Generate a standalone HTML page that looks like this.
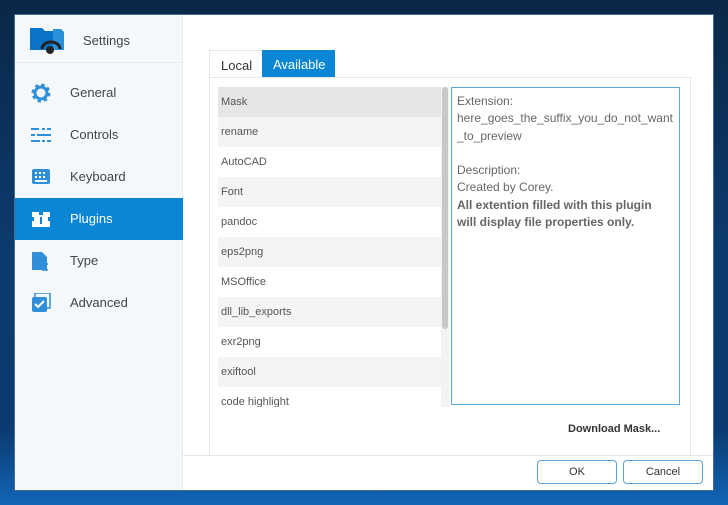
<!DOCTYPE html>
<html><head><meta charset="utf-8"><style>
*{margin:0;padding:0;box-sizing:border-box}
body{width:728px;height:505px;overflow:hidden;font-family:"Liberation Sans",sans-serif;background:linear-gradient(180deg,#0a2848 0%,#0c3b6e 50%,#0a3a70 85%,#1266b8 100%);position:relative}
.win{position:absolute;left:14px;top:14px;width:700px;height:477px;background:#fff;border:1px solid #4a6a8a;overflow:hidden}
.side{position:absolute;left:0;top:0;width:168px;height:100%;background:#f5f8fb;border-right:1px solid #e8ecef}
.hdr{height:48px;border-bottom:1px solid #e6eaee;position:relative}
.hdr span{position:absolute;left:68px;top:18px;font-size:13px;color:#444}
.nav{position:absolute;left:0;width:168px;height:42px;font-size:13px;color:#444}
.nav span{position:absolute;left:55px;top:13px}
.nav svg{position:absolute;left:16px;top:11px}
.nav.act{background:#0a86d4;color:#fff}
.tab{position:absolute;top:35px;height:27px;font-size:13px;padding:7px 11px}
.panel{position:absolute;left:194px;top:62px;width:482px;height:379px;border:1px solid #e6e6e6;border-bottom:none}
.row{position:absolute;left:8px;width:223px;height:30px;font-size:11px;color:#555;padding:9px 3px}
.row.g{background:#f4f4f4}
.desc{position:absolute;left:241px;top:9px;width:229px;height:318px;border:1px solid #5aaae0;padding:5px 5px;font-size:12px;color:#666;line-height:17.3px;word-break:break-all}
.btn{position:absolute;top:445px;width:80px;height:24px;border:1px solid #5aa0d6;border-radius:4px;font-size:11px;color:#333;text-align:center;line-height:22px}
</style></head><body>
<div class="win">
<div class="side">
<div class="hdr">
<svg style="position:absolute;left:14px;top:10px" width="36" height="30"><path d="M1 3h12l3 3h14v19H1z" fill="#0a74c8"/><path d="M24 4h8l3 3v18H24z" fill="#2a90d8"/><path d="M13 24a9 7 0 0 1 18 0" fill="none" stroke="#222" stroke-width="3"/><circle cx="21" cy="25" r="4" fill="#222"/></svg>
<span>Settings</span></div>
<div class="nav" style="top:57px"><svg width="20" height="20"><circle cx="10" cy="10" r="7.5" fill="none" stroke="#2f8fd8" stroke-width="4" stroke-dasharray="3 2.9"/><circle cx="10" cy="10" r="6" fill="none" stroke="#2f8fd8" stroke-width="3"/></svg><span>General</span></div>
<div class="nav" style="top:99px"><svg width="20" height="20" fill="#2f8fd8"><rect x="0" y="3" width="8" height="2"/><rect x="11" y="3" width="3" height="2"/><rect x="16" y="3" width="4" height="2"/><rect x="0" y="9" width="4" height="2"/><rect x="6" y="9" width="14" height="2"/><rect x="0" y="15" width="9" height="2"/><rect x="11" y="15" width="3" height="2"/><rect x="16" y="15" width="4" height="2"/></svg><span>Controls</span></div>
<div class="nav" style="top:141px"><svg width="20" height="20"><rect x="1" y="2" width="18" height="15" rx="2" fill="#2f8fd8"/><g fill="#fff"><rect x="4" y="5" width="2" height="2"/><rect x="8" y="5" width="2" height="2"/><rect x="12" y="5" width="2" height="2"/><rect x="4" y="9" width="2" height="2"/><rect x="8" y="9" width="2" height="2"/><rect x="12" y="9" width="2" height="2"/><rect x="4" y="13" width="12" height="2"/></g></svg><span>Keyboard</span></div>
<div class="nav act" style="top:183px"><svg width="20" height="20"><path d="M1 3h7v3h4V3h7v5h-2v4h2v6H1v-6h2V8H1z" fill="#fff"/><rect x="9" y="8" width="2" height="7" fill="#0a86d4"/></svg><span>Plugins</span></div>
<div class="nav" style="top:225px"><svg width="20" height="20"><path d="M1 1h10l5 5v13H1z" fill="#2f8fd8"/><path d="M11 13h6M14 13v6M11 19h6" stroke="#2f8fd8" stroke-width="1.5"/></svg><span>Type</span></div>
<div class="nav" style="top:267px"><svg width="20" height="20"><rect x="4" y="0" width="15" height="15" fill="none" stroke="#2f8fd8" stroke-width="1.5"/><rect x="1" y="4" width="15" height="15" rx="2" fill="#2f8fd8"/><path d="M4 11l3 3 6-6" stroke="#fff" stroke-width="2" fill="none"/></svg><span>Advanced</span></div>
</div>
<div class="tab" style="left:194px;color:#333;border:1px solid #e6e6e6;border-bottom:none">Local</div>
<div class="tab" style="left:247px;background:#0a86d4;color:#fff;width:73px">Available</div>
<div class="panel">
<div class="row g" style="top:9px;background:#e6e6e6">Mask</div>
<div class="row g" style="top:39px">rename</div>
<div class="row" style="top:69px">AutoCAD</div>
<div class="row g" style="top:99px">Font</div>
<div class="row" style="top:129px">pandoc</div>
<div class="row g" style="top:159px">eps2png</div>
<div class="row" style="top:189px">MSOffice</div>
<div class="row g" style="top:219px">dll_lib_exports</div>
<div class="row" style="top:249px">exr2png</div>
<div class="row g" style="top:279px">exiftool</div>
<div class="row" style="top:309px;height:20px;overflow:hidden">code highlight</div>
<div style="position:absolute;left:231px;top:9px;width:8px;height:320px;background:#f2f2f2"></div>
<div style="position:absolute;left:232px;top:9px;width:6px;height:242px;background:#c8c8c8;border-radius:3px"></div>
<div class="desc">Extension:<br>here_goes_the_suffix_you_do_not_want_to_preview<br><br>Description:<br>Created by Corey.<br><b style="word-break:normal">All extention filled with this plugin will display file properties only.</b></div>
<div style="position:absolute;left:358px;top:345px;font-size:11px;font-weight:bold;color:#333">Download Mask...</div>
</div>
<div style="position:absolute;left:168px;top:440px;width:532px;border-top:1px solid #e6e6e6"></div>
<div class="btn" style="left:522px">OK</div>
<div class="btn" style="left:608px">Cancel</div>
</div>
</body></html>
